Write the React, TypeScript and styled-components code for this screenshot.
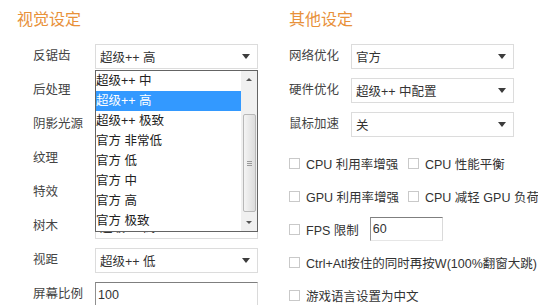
import React from "react";
import styled, { createGlobalStyle } from "styled-components";

const Global = createGlobalStyle`
  html, body { margin: 0; padding: 0; background: #fff; }
  body {
    width: 538px; height: 305px; overflow: hidden;
    font-family: "Liberation Sans", "Noto Sans CJK SC", sans-serif;
    font-size: 12.5px; color: #333;
  }
`;

const Page = styled.div`
  display: flex;
  width: 538px;
  height: 305px;
  overflow: hidden;
`;

const Column = styled.div<{ $w?: number; $pl: number }>`
  display: flex;
  flex-direction: column;
  width: ${(p) => (p.$w ? `${p.$w}px` : "auto")};
  flex: ${(p) => (p.$w ? "none" : "1")};
  padding-left: ${(p) => p.$pl}px;
  box-sizing: border-box;
`;

const Title = styled.div`
  margin-top: 10px;
  height: 20px;
  line-height: 20px;
  font-size: 16px;
  color: #e8913a;
  margin-bottom: 14px;
`;

const Rows = styled.div<{ $indent: number }>`
  display: flex;
  flex-direction: column;
  gap: 9px;
  padding-left: ${(p) => p.$indent}px;
`;

const Row = styled.div`
  display: flex;
  align-items: center;
  height: 25px;
`;

const Label = styled.div`
  width: 62px;
  flex: none;
  color: #444;
  line-height: 25px;
`;

const SelectWrap = styled.div`
  position: relative;
  width: 163px;
  height: 25px;
`;

const SelectBox = styled.div`
  box-sizing: border-box;
  width: 100%;
  height: 100%;
  border: 1px solid #dcdcdc;
  display: flex;
  align-items: center;
  justify-content: space-between;
  padding: 0 7px 0 4px;
  background: #fff;
  color: #333;
`;

const Arrow = styled.span`
  width: 0;
  height: 0;
  border-left: 4px solid transparent;
  border-right: 4px solid transparent;
  border-top: 5px solid #3c3c3c;
`;

const InsetInput = styled.div<{ $w: number; $h: number }>`
  box-sizing: border-box;
  width: ${(p) => p.$w}px;
  height: ${(p) => p.$h}px;
  border-top: 1px solid #7f7f7f;
  border-left: 1px solid #8f8f8f;
  border-right: 1px solid #dadada;
  border-bottom: 1px solid #e6e6e6;
  padding-left: 2px;
  display: flex;
  align-items: center;
  color: #333;
  background: #fff;
`;

const List = styled.div`
  position: absolute;
  top: 26px;
  left: 0;
  width: 163px;
  height: 162px;
  box-sizing: border-box;
  border: 1px solid #646464;
  background: #fff;
  display: flex;
  z-index: 5;
`;

const Items = styled.div`
  flex: 1;
  display: flex;
  flex-direction: column;
`;

const Item = styled.div<{ $sel?: boolean }>`
  height: 20px;
  line-height: 20px;
  color: ${(p) => (p.$sel ? "#fff" : "#222")};
  background: ${(p) => (p.$sel ? "#3399ff" : "transparent")};
  white-space: nowrap;
`;

const Scrollbar = styled.div`
  width: 16px;
  flex: none;
  background: #f0f0f0;
  display: flex;
  flex-direction: column;
  align-items: center;
`;

const ScrollBtn = styled.div`
  height: 17px;
  width: 16px;
  display: flex;
  align-items: center;
  justify-content: center;
`;

const UpArrow = styled.span`
  width: 0; height: 0;
  border-left: 3px solid transparent;
  border-right: 3px solid transparent;
  border-bottom: 3px solid #555;
`;

const DownArrow = styled.span`
  width: 0; height: 0;
  border-left: 3px solid transparent;
  border-right: 3px solid transparent;
  border-top: 3px solid #555;
`;

const Thumb = styled.div`
  margin-top: 26px;
  width: 13px;
  height: 98px;
  box-sizing: border-box;
  border: 1px solid #b8b8b8;
  border-radius: 2px;
  background: linear-gradient(to right, #f4f4f4, #dcdcdc);
  display: flex;
  align-items: center;
  justify-content: center;
`;

const Grip = styled.div`
  width: 5px;
  height: 5px;
  border-top: 1px solid #999;
  border-bottom: 1px solid #999;
  position: relative;
  box-sizing: border-box;
  &::after {
    content: "";
    position: absolute;
    left: 0; right: 0; top: 1px;
    border-top: 1px solid #999;
  }
`;

const Spacer = styled.div`
  flex: 1;
`;

const Checks = styled.div`
  margin-top: 14px;
  display: grid;
  grid-template-columns: 119px auto;
  grid-auto-rows: 24px;
  row-gap: 9px;
`;

const CheckItem = styled.div<{ $span?: boolean }>`
  display: flex;
  align-items: center;
  gap: 6px;
  white-space: nowrap;
  color: #333;
  grid-column: ${(p) => (p.$span ? "1 / span 2" : "auto")};
`;

const Box = styled.span`
  width: 11px;
  height: 11px;
  box-sizing: border-box;
  border: 1px solid #c9c9c9;
  background: #fff;
  flex: none;
`;

const FpsText = styled.span`
  margin-right: 5px;
`;

const leftItems = [
  "超级++ 中",
  "超级++ 高",
  "超级++ 极致",
  "官方 非常低",
  "官方 低",
  "官方 中",
  "官方 高",
  "官方 极致",
];

function Select({ value, open }: { value: string; open?: boolean }) {
  return (
    <SelectWrap>
      <SelectBox>
        <span>{value}</span>
        <Arrow />
      </SelectBox>
      {open && (
        <List>
          <Items>
            {leftItems.map((t) => (
              <Item key={t} $sel={t === value}>
                {t}
              </Item>
            ))}
          </Items>
          <Scrollbar>
            <ScrollBtn>
              <UpArrow />
            </ScrollBtn>
            <Thumb>
              <Grip />
            </Thumb>
            <Spacer />
            <ScrollBtn>
              <DownArrow />
            </ScrollBtn>
          </Scrollbar>
        </List>
      )}
    </SelectWrap>
  );
}

export default function App() {
  return (
    <Page>
      <Global />
      <Column $w={289} $pl={17}>
        <Title>视觉设定</Title>
        <Rows $indent={16}>
          <Row>
            <Label>反锯齿</Label>
            <Select value="超级++ 高" open />
          </Row>
          <Row>
            <Label>后处理</Label>
            <Select value="超级++ 高" />
          </Row>
          <Row>
            <Label>阴影光源</Label>
            <Select value="超级++ 高" />
          </Row>
          <Row>
            <Label>纹理</Label>
            <Select value="超级++ 高" />
          </Row>
          <Row>
            <Label>特效</Label>
            <Select value="超级++ 高" />
          </Row>
          <Row>
            <Label>树木</Label>
            <Select value="超级++ 高" />
          </Row>
          <Row>
            <Label>视距</Label>
            <Select value="超级++ 低" />
          </Row>
          <Row>
            <Label>屏幕比例</Label>
            <InsetInput $w={163} $h={25}>100</InsetInput>
          </Row>
        </Rows>
      </Column>
      <Column $pl={0}>
        <Title>其他设定</Title>
        <Rows $indent={0}>
          <Row>
            <Label>网络优化</Label>
            <Select value="官方" />
          </Row>
          <Row>
            <Label>硬件优化</Label>
            <Select value="超级++ 中配置" />
          </Row>
          <Row>
            <Label>鼠标加速</Label>
            <Select value="关" />
          </Row>
        </Rows>
        <Checks>
          <CheckItem>
            <Box />
            CPU 利用率增强
          </CheckItem>
          <CheckItem>
            <Box />
            CPU 性能平衡
          </CheckItem>
          <CheckItem>
            <Box />
            GPU 利用率增强
          </CheckItem>
          <CheckItem>
            <Box />
            CPU 减轻 GPU 负荷
          </CheckItem>
          <CheckItem $span>
            <Box />
            <FpsText>FPS 限制</FpsText>
            <InsetInput $w={73} $h={24}>60</InsetInput>
          </CheckItem>
          <CheckItem $span>
            <Box />
            Ctrl+Atl按住的同时再按W(100%翻窗大跳)
          </CheckItem>
          <CheckItem $span>
            <Box />
            游戏语言设置为中文
          </CheckItem>
        </Checks>
      </Column>
    </Page>
  );
}
